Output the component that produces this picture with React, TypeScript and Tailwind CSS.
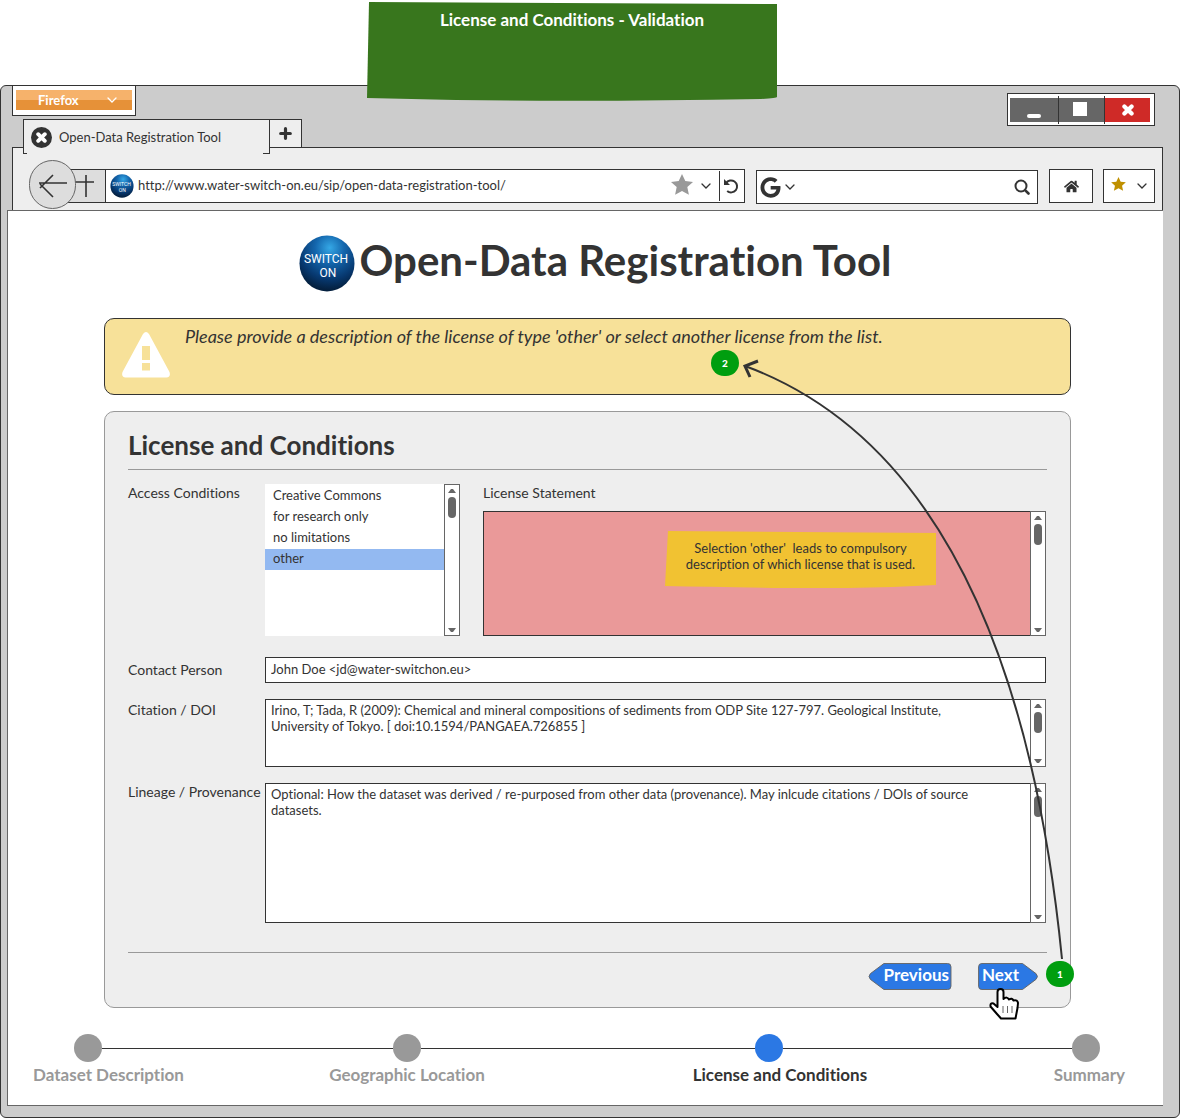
import React from "react";
import { FaGoogle, FaHome } from "react-icons/fa";

const LICENSES = ["Creative Commons", "for research only", "no limitations", "other"];

function Chevron({ className = "" }: { className?: string }) {
  return (
    <svg className={"h-2 w-2.5 shrink-0 " + className} viewBox="0 0 10 8" fill="none" stroke="currentColor" strokeWidth="1.300" strokeLinecap="round">
      <path d="M1 2l4 4 4-4" />
    </svg>
  );
}

function Star({ className = "" }: { className?: string }) {
  return (
    <svg className={"shrink-0 " + className} viewBox="0 0 22 21" fill="currentColor">
      <path d="M11 0l3.3 7 7.7.9-5.7 5.2 1.6 7.7L11 17l-6.9 3.8 1.6-7.7L0 7.9 7.7 7z" />
    </svg>
  );
}

function Cross({ className = "" }: { className?: string }) {
  return (
    <svg className={"shrink-0 " + className} viewBox="0 0 12 12" stroke="currentColor" strokeWidth="4.200" strokeLinecap="round">
      <path d="M2.400 2.400l7.200 7.200M9.600 2.400L2.400 9.600" />
    </svg>
  );
}

function Logo({ className }: { className: string }) {
  return (
    <svg className={"shrink-0 " + className} viewBox="0 0 56 57" role="img" aria-label="Switch On">
      <defs>
        <radialGradient id="sphere" cx="0.55" cy="0.22" r="0.75">
          <stop offset="0" stopColor="#35a8e6" />
          <stop offset="0.35" stopColor="#1467ae" />
          <stop offset="0.75" stopColor="#07386f" />
          <stop offset="1" stopColor="#04203f" />
        </radialGradient>
      </defs>
      <ellipse cx="28" cy="28.500" rx="27.500" ry="28" fill="url(#sphere)" />
      <text x="27" y="28" textAnchor="middle" fontSize="12" fill="#fff" fontFamily="Roboto, sans-serif">SWITCH</text>
      <text x="29" y="42" textAnchor="middle" fontSize="12" fill="#fff" fontFamily="Roboto, sans-serif">ON</text>
    </svg>
  );
}

function ScrollBar() {
  return (
    <div aria-hidden="true" className="flex w-4 shrink-0 flex-col items-center border border-[#666] bg-white pt-1 pb-[3px] text-[#666]">
      <svg className="h-1 w-2" viewBox="0 0 8 4" fill="currentColor"><path d="M0 4l3-4h2l3 4z" /></svg>
      <div className="mt-1 h-[21px] w-2 rounded bg-[#666]" />
      <svg className="mt-auto h-1 w-2" viewBox="0 0 8 4" fill="currentColor"><path d="M0 0h8L5 4H3z" /></svg>
    </div>
  );
}

function TextBox({ id, height, fill = "bg-white", value = "" }: { id: string; height: string; fill?: string; value?: string }) {
  return (
    <div className={"flex " + height}>
      <textarea
        id={id}
        defaultValue={value}
        className={"-mr-px min-w-0 flex-1 resize-none overflow-hidden border border-[#333] py-0.5 pr-9 pl-[5px] text-[13px] leading-4 outline-none " + fill}
      />
      <ScrollBar />
    </div>
  );
}

function Badge({ children, className }: { children: string; className: string }) {
  return (
    <span className={"absolute flex h-[26px] w-7 items-center justify-center rounded-full bg-[#009e0f] text-[10px] font-black text-white " + className}>
      {children}
    </span>
  );
}

function BrowserChrome() {
  return (
    <>
      <div className="flex items-start justify-between">
        <div className="ml-[11px]">
          <div className="w-[124px] border border-t-0 border-[#333] bg-white px-[3px] pt-1 pb-[5px]">
            <button className="flex h-5 w-full items-center justify-between bg-linear-to-b from-[#f6b26b] from-50% to-[#e69138] to-50% pr-[15px] pl-[22px] text-[13px] leading-5 font-bold text-white">
              Firefox
              <Chevron />
            </button>
          </div>
          <div className="relative z-10 mt-[3px] -mb-[7px] ml-[11px] flex items-start">
            <div className="relative flex h-[35px] w-[247px] items-center border border-b-0 border-[#333] bg-[#eee] pt-px pl-[7px] text-[13px]">
              <span className="mr-[7px] flex size-[21px] items-center justify-center rounded-full bg-[#333] text-white">
                <Cross className="size-[11px]" />
              </span>
              Open-Data Registration Tool
              <span className="absolute bottom-0 left-0 w-[3px] border-b border-[#333]" />
              <span className="absolute right-0 bottom-0 w-1.5 border-b border-[#333]" />
            </div>
            <button aria-label="New tab" className="-ml-px flex h-[29px] w-[33px] items-center justify-center border border-[#333] bg-[#eee]">
              <svg className="size-[13px]" viewBox="0 0 13 13" stroke="currentColor" strokeWidth="3.200" strokeLinecap="round"><path d="M6.500 1.700v9.600M1.700 6.500h9.600" /></svg>
            </button>
          </div>
        </div>
        <div className="mt-[7px] mr-6 flex h-[33px] w-[148px] border border-[#333] bg-white pt-1 pr-1 pb-[3px] pl-0.5">
          <button aria-label="Minimize" className="flex w-12 items-end justify-center bg-[#666] pb-1">
            <span className="h-1 w-3.5 rounded-sm bg-white" />
          </button>
          <span className="-my-0.5 w-px bg-[#333]" />
          <button aria-label="Maximize" className="flex flex-1 items-center justify-center bg-[#666]">
            <span className="mr-1 mb-0.5 size-3.5 bg-white" />
          </button>
          <span className="-my-0.5 w-px bg-[#333]" />
          <button aria-label="Close" className="flex flex-1 items-center justify-center bg-[#cf2a27] text-white">
            <Cross className="size-3" />
          </button>
        </div>
      </div>

      <div className="mr-4 ml-[11px] flex h-[63px] items-start border border-b-0 border-[#333] bg-[#eee] pt-[21px] pr-[7px] pl-4">
        <button aria-label="Back" className="relative z-10 -mt-[9px] flex h-[49px] w-[47px] shrink-0 items-center justify-center rounded-full border border-[#666] bg-[#ddd]">
          <svg className="h-7 w-[30px]" viewBox="0 0 30 28" fill="none" stroke="currentColor" strokeWidth="1.600"><path d="M29 12H1M15 4L2 17M2 13l13 13" /></svg>
        </button>
        <button aria-label="Forward" className="-ml-4 flex h-[34px] w-[46px] shrink-0 items-center justify-end border border-[#333] bg-[#ddd] pr-2.5">
          <svg className="h-6 w-5" viewBox="0 0 20 24" fill="none" stroke="currentColor" strokeWidth="1.600"><path d="M11 1v22M0 8h19" /></svg>
        </button>
        <div className="-ml-px flex h-[34px] min-w-0 flex-1 items-center border border-[#333] bg-white">
          <Logo className="ml-1 size-6" />
          <input
            aria-label="Address"
            defaultValue="http://www.water-switch-on.eu/sip/open-data-registration-tool/"
            className="ml-1 min-w-0 flex-1 text-[13px] outline-none"
          />
          <Star className="mr-2 mb-1 h-[21px] w-[22px] text-[#999]" />
          <Chevron />
          <span className="ml-2 h-[30px] w-px bg-[#333]" />
          <button aria-label="Reload" className="pr-[5px] pl-[3px]">
            <svg className="size-4" viewBox="0 0 16 16" fill="none" stroke="currentColor" strokeWidth="2"><path d="M3 5.200A6 6 0 1 1 4.200 13" /><path d="M1 1v6h6z" fill="currentColor" stroke="none" /></svg>
          </button>
        </div>
        <div className="mt-px ml-[11px] flex h-[34px] w-[282px] shrink-0 items-center border border-[#333] bg-white">
          <FaGoogle className="ml-[3px] size-[21px] shrink-0" />
          <Chevron className="ml-1" />
          <input aria-label="Search the web" className="min-w-0 flex-1 outline-none" />
          <svg className="mr-[7px] size-4" viewBox="0 0 16 16" fill="none" stroke="currentColor" strokeWidth="2" strokeLinecap="round"><circle cx="7" cy="7" r="5.500" /><path d="M11.300 11.300L14.500 14.500" strokeWidth="2.600" /></svg>
        </div>
        <button aria-label="Home" className="ml-[11px] flex h-[34px] w-11 shrink-0 items-center justify-center border border-[#333] bg-white">
          <FaHome className="size-[15px]" />
        </button>
        <button aria-label="Bookmarks" className="ml-2.5 flex h-[34px] w-[52px] shrink-0 items-center justify-between border border-[#333] bg-white px-[7px]">
          <Star className="mb-1 h-3.5 w-[15px] text-[#bf9000]" />
          <Chevron />
        </button>
      </div>
    </>
  );
}

function Form() {
  return (
    <form onSubmit={(e) => e.preventDefault()} className="mt-4 rounded-[10px] border border-[#999] bg-[#eee] pt-[17px] pr-[23px] pb-[17px] pl-[23px]">
      <h2 className="border-b border-[#999] pb-2 text-[26px] leading-8 font-bold">License and Conditions</h2>

      <div className="mt-3.5 mr-px grid grid-cols-[137px_minmax(0,1fr)] gap-y-4 text-sm leading-[18px]">
        <label htmlFor="access">Access Conditions</label>
        <div className="mb-[5px] flex">
          <div className="flex h-[152px] w-[195px] shrink-0 bg-white">
            <select
              id="access"
              size={7}
              defaultValue="other"
              className="min-w-0 flex-1 appearance-none overflow-hidden border-0 bg-white pt-0.5 text-[13px] outline-none [scrollbar-width:none]"
            >
              {LICENSES.map((name) => (
                <option key={name} value={name} className="h-[21px] min-h-0 pt-px pr-0 pb-0 pl-2 leading-5 text-[#333] checked:bg-[#93b9f1] checked:bg-linear-to-b checked:from-[#93b9f1] checked:to-[#93b9f1]">
                  {name}
                </option>
              ))}
            </select>
            <ScrollBar />
          </div>
          <div className="relative ml-[23px] min-w-0 flex-1">
            <label htmlFor="statement" className="mb-[9px] block">License Statement</label>
            <TextBox id="statement" height="h-[125px]" fill="bg-[#ea9999]" />
            <div className="absolute top-[46px] left-1/2 -ml-[100px] flex h-[58px] w-[272px] justify-center pt-2.5 text-center text-[13px] leading-4">
              <svg className="absolute inset-0 size-full" viewBox="0 0 272 58" preserveAspectRatio="none"><path d="M3 1L271 3V55Q200 59 120 58Q50 57 0 56Z" fill="#f1c232" /></svg>
              <p className="relative whitespace-pre">{"Selection 'other'  leads to compulsory\ndescription of which license that is used."}</p>
            </div>
          </div>
        </div>

        <label htmlFor="contact" className="self-center">Contact Person</label>
        <input id="contact" defaultValue="John Doe <jd@water-switchon.eu>" className="h-[26px] w-full border border-[#333] bg-white px-[5px] pb-[3px] text-[13px] outline-none" />

        <label htmlFor="citation" className="pt-0.5">Citation / DOI</label>
        <TextBox
          id="citation"
          height="h-[68px]"
          value="Irino, T; Tada, R (2009): Chemical and mineral compositions of sediments from ODP Site 127-797. Geological Institute, University of Tokyo. [ doi:10.1594/PANGAEA.726855 ]"
        />

        <label htmlFor="lineage">Lineage / Provenance</label>
        <TextBox
          id="lineage"
          height="h-[140px]"
          value="Optional: How the dataset was derived / re-purposed from other data (provenance). May inlcude citations / DOIs of source datasets."
        />
      </div>

      <div className="mt-[29px] flex justify-end gap-6 border-t border-[#999] pt-2.5 pr-2 text-[17px] leading-6 font-bold text-white">
        <button type="button" className="relative h-[27px] w-[86px] pr-1 pb-[3px] text-right">
          <svg className="absolute inset-0 size-full" viewBox="0 0 86 28"><path d="M16 .5H82Q85.500 .5 85.500 4V24Q85.500 27.500 82 27.500H16L2 17Q-1 14 2 11Z" fill="#2b78e4" stroke="#666" /></svg>
          <span className="relative">Previous</span>
        </button>
        <button type="submit" className="relative h-[27px] w-[62px] pb-[3px] pl-[5px] text-left">
          <svg className="absolute inset-0 size-full" viewBox="0 0 62 28"><path d="M46 .5H4Q.5 .5 .5 4V24Q.5 27.500 4 27.500H46L60 17Q63 14 60 11Z" fill="#2b78e4" stroke="#666" /></svg>
          <span className="relative">Next</span>
        </button>
      </div>
    </form>
  );
}

function Steps() {
  return (
    <nav aria-label="Progress" className="mt-[26px] pb-[18px] font-bold">
      <div aria-hidden="true" className="flex items-center pr-[63px] pl-[66px]">
        <span className="size-7 rounded-full bg-[#999]" />
        <span className="h-px flex-[291] bg-[#333]" />
        <span className="size-7 rounded-full bg-[#999]" />
        <span className="h-px flex-[334] bg-[#333]" />
        <span className="size-7 rounded-full bg-[#2b78e4]" />
        <span className="h-px flex-[289] bg-[#333]" />
        <span className="size-7 rounded-full bg-[#999]" />
      </div>
      <ol className="mt-px flex pr-[38px] pl-[25px] text-[17px] leading-6 text-[#999]">
        <li>Dataset Description</li>
        <li aria-hidden="true" className="flex-[144]" />
        <li>Geographic Location</li>
        <li aria-hidden="true" className="flex-[206]" />
        <li aria-current="step" className="text-[#333]">License and Conditions</li>
        <li aria-hidden="true" className="flex-[185]" />
        <li>Summary</li>
      </ol>
    </nav>
  );
}

export default function App() {
  return (
    <div className="relative min-h-screen bg-white pt-[85px] font-['Lato',sans-serif] text-[#333] [font-variant-ligatures:none]">
      <div className="rounded-md border border-[#333] bg-[#ccc] pb-[11px]">
        <BrowserChrome />
        <main className="mr-4 ml-1.5 border border-r-0 border-[#666] bg-white">
          <div className="mt-6 flex h-[57px] items-center justify-center pl-5">
            <Logo className="h-[57px] w-14" />
            <h1 className="ml-1 pb-2 text-[42px] leading-[48px] font-bold">Open-Data Registration Tool</h1>
          </div>

          <div className="relative mt-[26px] mr-[92px] ml-24">
            <div role="alert" className="flex h-[77px] items-start rounded-[10px] border border-[#333] bg-[#f7e199] pl-[17px] text-lg leading-6 italic">
              <svg className="mt-[13px] mr-[15px] h-[46px] w-12 shrink-0" viewBox="0 0 48 46" fill="#fff" fillRule="evenodd">
                <path d="M21 2Q24-2 27 2L47.500 40Q49 45 44.500 45.500H3.500Q-1 45 .5 40ZM20 14V28H28V14ZM20 31V38.500H28V31Z" />
              </svg>
              <p className="mt-[5px]">Please provide a description of the license of type 'other' or select another license from the list.</p>
            </div>

            <Form />

            <svg className="pointer-events-none absolute top-[37px] right-0 h-[606px] w-[331px]" viewBox="0 0 331 606" fill="none" stroke="#333" strokeWidth="2">
              <path d="M5 11Q273 110 322 604" />
              <path d="M18 6L5 11L10 22" strokeWidth="3" />
            </svg>
            <Badge className="top-8 right-[332px]">2</Badge>
            <Badge className="-right-[3px] bottom-[21px]">1</Badge>
            <svg className="pointer-events-none absolute right-[52px] -bottom-3 h-8 w-[30px]" viewBox="0 0 30 32" fill="#fff" stroke="#000" strokeWidth="2" strokeLinejoin="round">
              <path d="M8.500 19V4Q8.500 1 11.500 1Q14.500 1 14.500 4V11Q18 8 20 11.500Q23 9.500 24.500 12.500Q28.500 11.500 29 15L28.500 20L26.500 30.500H12L8 26L1.500 18.500Q1 14.500 4.500 15.500L8.500 19Z" />
              <path d="M14 18v7M18.500 18v7M23 18v7" strokeWidth="1" stroke="#666" />
            </svg>
          </div>

          <Steps />
        </main>
      </div>

      <div className="absolute top-0 left-1/2 -ml-[224px] flex h-[101px] w-[412px] justify-center pt-2 text-[17px] leading-6 font-bold text-white">
        <svg className="absolute inset-0 size-full" viewBox="0 0 412 101" preserveAspectRatio="none"><path d="M3 2L411 4V97Q411 98 395 99Q230 102 90 100L1 98Z" fill="#38761d" /></svg>
        <p className="relative">License and Conditions - Validation</p>
      </div>
    </div>
  );
}
